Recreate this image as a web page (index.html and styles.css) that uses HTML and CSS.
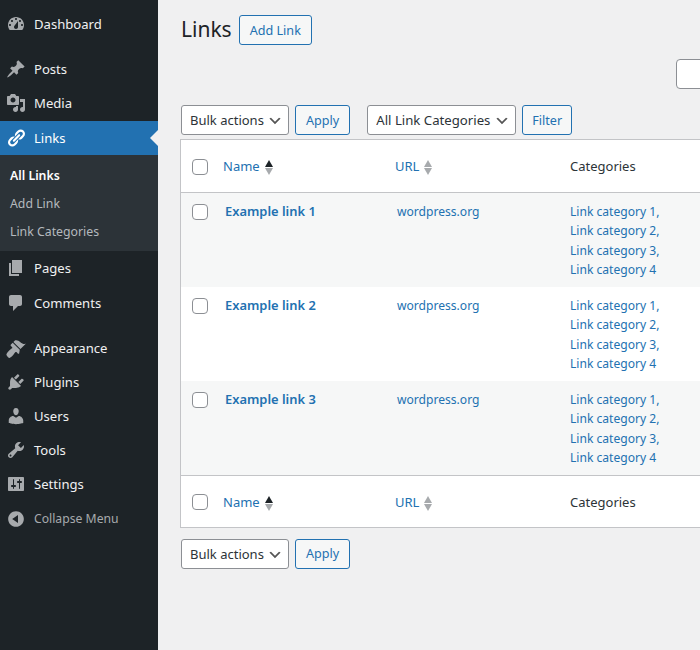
FILE: index.html
```html
<!DOCTYPE html>
<html lang="en">
<head>
    <meta charset="UTF-8">
    <title>Links</title>
    <link rel="stylesheet" href="styles.css">
</head>
<body>
    <div class="sidebar">
        <ul class="menu">
            <li class="menu-item"><svg class="menu-icon" viewBox="0 0 20 20"><path fill-rule="evenodd" d="M3.76 16h12.48c1.1-1.37 1.76-3.11 1.76-5 0-4.42-3.58-8-8-8s-8 3.58-8 8c0 1.89.66 3.63 1.76 5zM10 4c.55 0 1 .45 1 1s-.45 1-1 1-1-.45-1-1 .45-1 1-1zM6 6c.55 0 1 .45 1 1s-.45 1-1 1-1-.45-1-1 .45-1 1-1zm8 0c.55 0 1 .45 1 1s-.45 1-1 1-1-.45-1-1 .45-1 1-1zm-5.37 5.55L12 7v6c0 1.1-.9 2-2 2s-2-.9-2-2c0-.57.24-1.08.63-1.45zM4 10c.55 0 1 .45 1 1s-.45 1-1 1-1-.45-1-1 .45-1 1-1zm12 0c.55 0 1 .45 1 1s-.45 1-1 1-1-.45-1-1 .45-1 1-1z"/></svg>Dashboard</li>
            <li class="menu-sep"></li>
            <li class="menu-item"><svg class="menu-icon" viewBox="0 0 20 20"><path d="M10.44 3.02l1.82-1.82 6.36 6.35-1.83 1.82c-1.05-.68-2.48-.57-3.41.36l-.75.75c-.92.93-1.04 2.35-.35 3.41l-1.83 1.82-2.41-2.41-2.8 2.79c-.42.42-3.38 2.71-3.8 2.29s1.86-3.39 2.28-3.81l2.79-2.79L4.1 9.36l1.83-1.82c1.05.69 2.48.57 3.4-.36l.75-.75c.93-.92 1.05-2.35.36-3.41z"/></svg>Posts</li>
            <li class="menu-item"><svg class="menu-icon" viewBox="0 0 20 20"><path fill-rule="evenodd" d="M13 11V4c0-.55-.45-1-1-1h-1.67L9 1H5L3.67 3H2c-.55 0-1 .45-1 1v7c0 .55.45 1 1 1h10c.55 0 1-.45 1-1zM7 4.5c1.38 0 2.5 1.12 2.5 2.5S8.38 9.5 7 9.5 4.5 8.38 4.5 7 5.62 4.5 7 4.5zM14 6h5v10.5c0 1.38-1.12 2.5-2.5 2.5S14 17.88 14 16.5s1.12-2.5 2.5-2.5c.17 0 .34.02.5.05V9h-3V6zm-4 8.05V13h2v3.5c0 1.38-1.12 2.5-2.5 2.5S7 17.88 7 16.5 8.12 14 9.5 14c.17 0 .34.02.5.05z"/></svg>Media</li>
            <li class="menu-item active"><svg class="menu-icon" viewBox="0 0 20 20"><path d="M17.74 2.76c1.68 1.69 1.68 4.41 0 6.1l-1.53 1.52c-1.12 1.12-2.7 1.47-4.14 1.09l2.62-2.61.76-.77.76-.76c.84-.84.84-2.2 0-3.04-.84-.85-2.2-.85-3.04 0l-.77.76-3.38 3.38c-.37-1.44-.02-3.02 1.1-4.14l1.52-1.53c1.69-1.68 4.42-1.68 6.1 0zM8.59 13.43l5.34-5.34c.42-.42.42-1.1 0-1.52-.44-.43-1.13-.39-1.53 0l-5.33 5.34c-.42.42-.42 1.1 0 1.52.44.43 1.13.39 1.52 0zm-.76 2.29l4.14-4.15c.38 1.44.03 3.02-1.09 4.14l-1.52 1.53c-1.69 1.68-4.41 1.68-6.1 0-1.68-1.68-1.68-4.42 0-6.1l1.53-1.52c1.12-1.12 2.7-1.47 4.14-1.1l-4.14 4.15c-.85.84-.85 2.2 0 3.05.84.84 2.2.84 3.04 0z"/></svg>Links</li>
            <li class="submenu">
                <a class="current">All Links</a>
                <a>Add Link</a>
                <a>Link Categories</a>
            </li>
            <li class="menu-item"><svg class="menu-icon" viewBox="0 0 20 20"><path d="M6 15V2h10v13H6zm-1 1h8v2H3V5h2v11z"/></svg>Pages</li>
            <li class="menu-item"><svg class="menu-icon" viewBox="0 0 20 20"><path d="M5 2h9c1.1 0 2 .9 2 2v7c0 1.1-.9 2-2 2h-2l-5 5v-5H5c-1.1 0-2-.9-2-2V4c0-1.1.9-2 2-2z"/></svg>Comments</li>
            <li class="menu-sep"></li>
            <li class="menu-item"><svg class="menu-icon" viewBox="0 0 20 20"><path d="M14.48 11.06L7.41 3.99l1.5-1.5c.5-.56 2.3-.47 3.51.32 1.21.8 1.43 1.28 2.91 2.1 1.18.64 2.45 1.26 4.45.85zm-.71.71L6.7 4.7 4.93 6.47c-.39.39-.39 1.02 0 1.41l1.06 1.06c.39.39.39 1.03 0 1.42-.6.6-1.43 1.11-2.21 1.69-.35.26-.7.53-1.01.84-1.34 1.34-2.37 3.09-2.37 3.69 0 .6.41 1.44 1.64 2.67.6.6 1.1.8 1.5.7.8-.2 2.4-1.6 3.2-2.4.31-.31.58-.66.84-1.01.58-.78 1.09-1.61 1.69-2.21.39-.39 1.03-.39 1.42 0l1.06 1.06c.39.39 1.02.39 1.41 0z"/></svg>Appearance</li>
            <li class="menu-item"><svg class="menu-icon" viewBox="0 0 20 20"><path d="M13.11 4.36L9.87 7.6 8 5.73l3.24-3.24c.35-.34 1.05-.2 1.56.32.52.51.66 1.21.31 1.55zm-8 1.77l.91-1.12 9.01 9.01-1.19.84c-.71.71-2.63 1.16-3.82 1.16H6.14L4.9 17.26c-.59.59-1.54.59-2.12 0-.59-.58-.59-1.53 0-2.12l1.24-1.24v-3.88c0-1.13.4-3.19 1.09-3.89zm7.26 3.97l3.24-3.24c.34-.35 1.04-.21 1.55.31.52.51.66 1.21.31 1.55l-3.24 3.25z"/></svg>Plugins</li>
            <li class="menu-item"><svg class="menu-icon" viewBox="0 0 20 20"><path d="M10 9.25c-2.27 0-2.73-3.44-2.73-3.44C7 4.02 7.82 2 9.97 2c2.16 0 2.98 2.02 2.71 3.81 0 0-.41 3.44-2.68 3.44zm0 2.57L12.72 10c2.39 0 4.52 2.33 4.52 4.53v2.49s-3.65 1.13-7.24 1.13c-3.65 0-7.24-1.13-7.24-1.13v-2.49c0-2.25 1.94-4.48 4.47-4.48z"/></svg>Users</li>
            <li class="menu-item"><svg class="menu-icon" viewBox="0 0 20 20"><path fill-rule="evenodd" d="M16.68 9.77c-1.34 1.34-3.3 1.67-4.95.99l-5.41 6.52c-.99.99-2.59.99-3.58 0s-.99-2.59 0-3.57l6.52-5.42c-.68-1.65-.35-3.61.99-4.95 1.28-1.28 3.12-1.62 4.72-1.06l-2.89 2.89 2.82 2.82 2.86-2.87c.53 1.58.18 3.39-1.08 4.65zM3.81 16.21c.4.39 1.04.39 1.43 0 .4-.4.4-1.04 0-1.43-.39-.4-1.03-.4-1.43 0-.39.39-.39 1.03 0 1.43z"/></svg>Tools</li>
            <li class="menu-item"><svg class="menu-icon" viewBox="0 0 20 20"><path fill-rule="evenodd" d="M18 16V4c0-.55-.45-1-1-1H3c-.55 0-1 .45-1 1v12c0 .55.45 1 1 1h14c.55 0 1-.45 1-1zM8 11h1c.55 0 1 .45 1 1s-.45 1-1 1H8v1.5c0 .28-.22.5-.5.5s-.5-.22-.5-.5V13H6c-.55 0-1-.45-1-1s.45-1 1-1h1V5.5c0-.28.22-.5.5-.5s.5.22.5.5V11zm5-2h-1c-.55 0-1-.45-1-1s.45-1 1-1h1V5.5c0-.28.22-.5.5-.5s.5.22.5.5V7h1c.55 0 1 .45 1 1s-.45 1-1 1h-1v5.5c0 .28-.22.5-.5.5s-.5-.22-.5-.5V9z"/></svg>Settings</li>
            <li class="menu-item collapse"><svg class="menu-icon" viewBox="0 0 20 20"><path fill-rule="evenodd" d="M10 2.16c4.33 0 7.84 3.51 7.84 7.84s-3.51 7.84-7.84 7.84S2.16 14.33 2.16 10 5.71 2.16 10 2.16zm2 11.72V6.12L6.18 9.97z"/></svg>Collapse Menu</li>
        </ul>
    </div>

    <div class="content">
        <div class="page-head">
            <h1>Links</h1>
            <button class="btn">Add Link</button>
        </div>

        <div class="search-row">
            <input class="search-box" type="search">
        </div>

        <div class="tablenav top">
            <select class="drop"><option>Bulk actions</option></select>
            <button class="btn">Apply</button>
            <select class="drop filter-drop"><option>All Link Categories</option></select>
            <button class="btn filter-btn">Filter</button>
        </div>

        <table class="links-table">
            <thead>
                <tr>
                    <td class="col-check"><input type="checkbox" class="check"></td>
                    <th class="col-name"><a>Name</a><span class="sort"><i class="up dark"></i><i class="down"></i></span></th>
                    <th class="col-url"><a>URL</a><span class="sort"><i class="up"></i><i class="down"></i></span></th>
                    <th class="col-cat">Categories</th>
                </tr>
            </thead>
            <tbody>
                <tr class="alt">
                    <td class="col-check"><input type="checkbox" class="check"></td>
                    <td class="col-name"><a class="row-title">Example link 1</a></td>
                    <td class="col-url"><a>wordpress.org</a></td>
                    <td class="col-cat"><a>Link category 1,</a><br><a>Link category 2,</a><br><a>Link category 3,</a><br><a>Link category 4</a></td>
                </tr>
                <tr>
                    <td class="col-check"><input type="checkbox" class="check"></td>
                    <td class="col-name"><a class="row-title">Example link 2</a></td>
                    <td class="col-url"><a>wordpress.org</a></td>
                    <td class="col-cat"><a>Link category 1,</a><br><a>Link category 2,</a><br><a>Link category 3,</a><br><a>Link category 4</a></td>
                </tr>
                <tr class="alt">
                    <td class="col-check"><input type="checkbox" class="check"></td>
                    <td class="col-name"><a class="row-title">Example link 3</a></td>
                    <td class="col-url"><a>wordpress.org</a></td>
                    <td class="col-cat"><a>Link category 1,</a><br><a>Link category 2,</a><br><a>Link category 3,</a><br><a>Link category 4</a></td>
                </tr>
            </tbody>
            <tfoot>
                <tr>
                    <td class="col-check"><input type="checkbox" class="check"></td>
                    <th class="col-name"><a>Name</a><span class="sort"><i class="up dark"></i><i class="down"></i></span></th>
                    <th class="col-url"><a>URL</a><span class="sort"><i class="up"></i><i class="down"></i></span></th>
                    <th class="col-cat">Categories</th>
                </tr>
            </tfoot>
        </table>

        <div class="tablenav bottom">
            <select class="drop"><option>Bulk actions</option></select>
            <button class="btn">Apply</button>
        </div>
    </div>
</body>
</html>
```

FILE: styles.css
```css
html, body {
    height: 100%;
}

body {
    margin: 0;
    display: flex;
    width: 700px;
    height: 650px;
    overflow: hidden;
    background-color: #f0f0f1;
    color: #1d2327;
    font-family: 'Noto Sans', 'Liberation Sans', sans-serif;
    font-size: 13px;
}

a {
    color: #2271b1;
}

/* sidebar */
.sidebar {
    flex: 0 0 158px;
    background-color: #1d2327;
}

.menu {
    list-style: none;
    margin: 0;
    padding: 7px 0 0;
}

.menu-item {
    display: flex;
    align-items: center;
    height: 34.2px;
    position: relative;
    color: #f0f0f1;
    font-size: 13.1px;
}

.menu-icon {
    flex: 0 0 20px;
    width: 20px;
    height: 20px;
    margin: 0 8px 0 6px;
    fill: #a7aaad;
}

.menu-sep {
    height: 11px;
}

.menu-item.active {
    background-color: #2271b1;
    color: #fff;
}

.menu-item.active .menu-icon {
    fill: #fff;
}

.menu-item.active::after {
    content: "";
    position: absolute;
    right: 0;
    top: 9px;
    border: 8px solid transparent;
    border-right-color: #f0f0f1;
    border-left-width: 0;
}

.menu-item.collapse {
    color: #a7aaad;
    font-size: 12.2px;
}

.submenu {
    background-color: #2c3338;
    padding: 7px 0 5.5px;
}

.submenu a {
    display: block;
    height: 28px;
    line-height: 28px;
    padding-left: 10px;
    font-size: 12.3px;
    color: #b4b9be;
}

.submenu a.current {
    color: #fff;
    font-weight: 600;
}

/* main column */
.content {
    flex: 0 0 auto;
    width: 695px;
    margin-left: 23px;
}

.page-head {
    display: flex;
    align-items: center;
    gap: 7px;
    padding-top: 15px;
}

h1 {
    margin: 0 0 2px;
    font-size: 21px;
    font-weight: 400;
    line-height: 28px;
}

.btn {
    height: 30px;
    padding: 0 10px;
    border: 1px solid #2271b1;
    border-radius: 3px;
    background-color: #f6f7f7;
    color: #2271b1;
    font-family: inherit;
    font-size: 12.6px;
}

.filter-btn {
    padding: 0 9px;
}

.search-row {
    display: flex;
    justify-content: flex-end;
    padding-top: 14px;
}

.search-box {
    width: 200px;
    height: 30px;
    box-sizing: border-box;
    border: 1px solid #8c8f94;
    border-radius: 4px;
    background-color: #fff;
}

.tablenav {
    display: flex;
    gap: 6px;
}

.tablenav.top {
    padding-top: 16px;
    height: 30px;
    padding-bottom: 4px;
}

.tablenav.bottom {
    padding-top: 11px;
}

.drop {
    appearance: none;
    height: 30px;
    padding: 0 24px 0 8px;
    border: 1px solid #8c8f94;
    border-radius: 3px;
    background: #fff url("data:image/svg+xml,%3Csvg xmlns='http://www.w3.org/2000/svg' width='20' height='20'%3E%3Cpath d='M5 6l5 5 5-5 2 1-7 7-7-7z' fill='%23555'/%3E%3C/svg%3E") no-repeat right 5px top 55%;
    background-size: 16px 16px;
    color: #2c3338;
    font-family: inherit;
    font-size: 13px;
}

.filter-drop {
    margin-left: 11px;
    font-size: 13.2px;
}

/* table */
.links-table {
    width: 696px;
    margin-left: -1px;
    table-layout: fixed;
    border-collapse: separate;
    border-spacing: 0;
    border: 1px solid #c3c4c7;
    background-color: #fff;
    line-height: 19.5px;
}

.links-table th,
.links-table td {
    vertical-align: top;
    text-align: left;
    font-weight: 400;
    font-size: 12.1px;
    color: #2c3338;
    padding: 9px 10px 7px;
}

.links-table tbody .col-cat {
    padding-top: 8.6px;
    padding-bottom: 7.4px;
}

.links-table thead th,
.links-table thead td,
.links-table tfoot th,
.links-table tfoot td {
    height: 35px;
    padding-top: 9px;
    padding-bottom: 8px;
    font-size: 13px;
    vertical-align: middle;
}

.links-table tfoot th,
.links-table tfoot td {
    height: 33px;
    padding-top: 10px;
    border-top: 1px solid #c3c4c7;
}

.links-table thead th,
.links-table thead td {
    border-bottom: 1px solid #c3c4c7;
}

.links-table .col-check {
    width: 23px;
    padding-left: 11px;
    padding-right: 0;
}

.links-table .col-name {
    width: 154px;
}

.links-table .col-url {
    width: 155px;
}

.links-table thead .col-name,
.links-table tfoot .col-name,
.links-table thead .col-url,
.links-table tfoot .col-url {
    padding-left: 8px;
}

.col-cat {
    width: 300px;
}

tr.alt {
    background-color: #f6f7f7;
}

.row-title {
    font-size: 12.9px;
    font-weight: 600;
}

.check {
    appearance: none;
    display: block;
    width: 16px;
    height: 16px;
    margin: 0;
    border: 1px solid #8c8f94;
    border-radius: 4px;
    background-color: #fff;
}

tbody .check {
    margin-top: 2px;
}

.sort {
    display: inline-flex;
    flex-direction: column;
    gap: 1px;
    margin-left: 5px;
    vertical-align: middle;
}

.sort i {
    display: block;
    border: 4.5px solid transparent;
    border-top-width: 0;
    border-bottom-width: 7px;
}

.sort .up {
    border-bottom-color: #a7aaad;
}

.sort .up.dark {
    border-bottom-color: #1d2327;
}

.sort .down {
    border-bottom-width: 0;
    border-top-width: 7px;
    border-top-color: #a7aaad;
}
```
